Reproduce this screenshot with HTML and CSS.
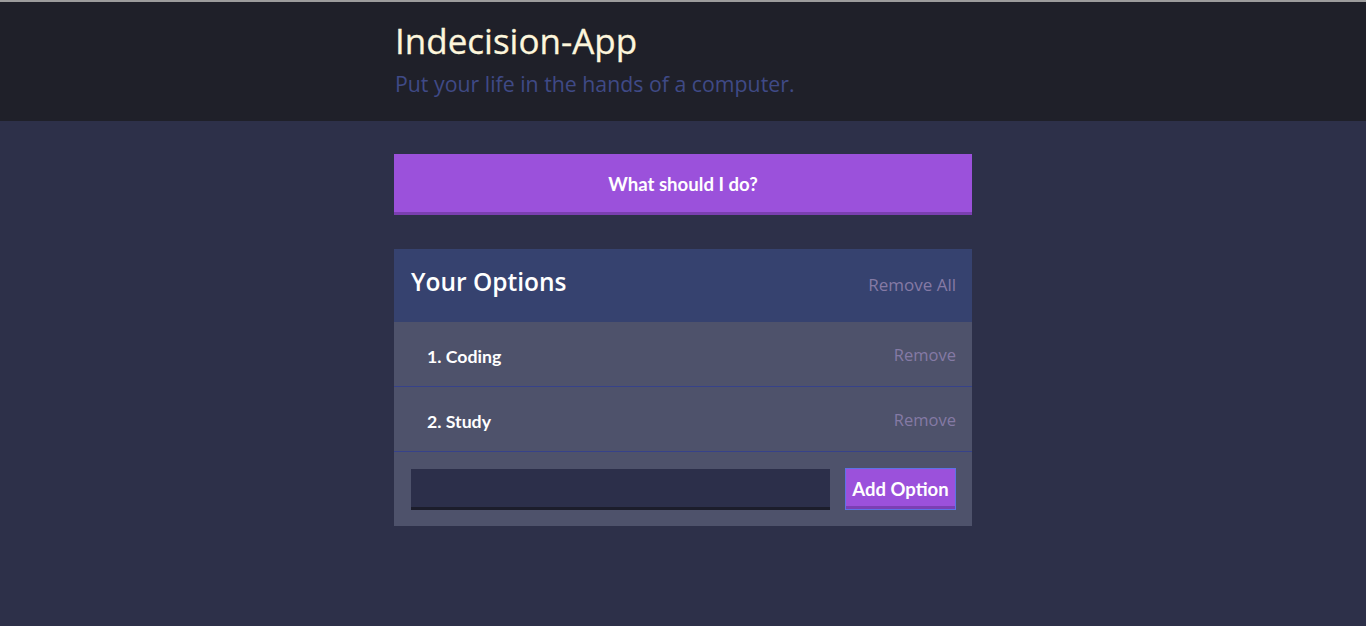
FILE: index.html
```html
<!DOCTYPE html>
<html>
<head>
<meta charset="utf-8">
<title>Indecision-App</title>
<link rel="stylesheet" href="styles.css">
</head>
<body>
<header class="header">
  <div class="container">
    <h1 class="header__title">Indecision-App</h1>
    <h2 class="header__subtitle">Put your life in the hands of a computer.</h2>
  </div>
</header>
<main class="container">
  <button class="big-button">What should I do?</button>
  <section class="widget">
    <div class="widget-header">
      <h3 class="widget-header__title">Your Options</h3>
      <button class="button--link">Remove All</button>
    </div>
    <div class="option">
      <p class="option__text">1. Coding</p>
      <button class="button--link">Remove</button>
    </div>
    <div class="option">
      <p class="option__text">2. Study</p>
      <button class="button--link">Remove</button>
    </div>
    <form class="add-option">
      <input class="add-option__input" type="text" name="option">
      <button class="button" type="button">Add Option</button>
    </form>
  </section>
</main>
</body>
</html>
```

FILE: styles.css
```css
* { box-sizing: border-box; }
html, body { margin: 0; padding: 0; }
body {
  background: #2d3049;
  font-family: "Lato", "Noto Sans", sans-serif;
  color: #ffffff;
  border-top: 2px solid #9c9c9c;
  min-height: 626px;
}
.container {
  width: 578px;
  margin: 0 auto;
}
.header {
  background: #1f2029;
  height: 119px;
  padding-top: 17px;
}
.header__title {
  margin: 0;
  font-family: "Open Sans", sans-serif;
  font-weight: 500;
  font-size: 35px;
  line-height: 44px;
  color: #fdf6dc;
  padding-left: 1px;
  -webkit-text-stroke: 0.3px #fdf6dc;
}
.header__subtitle {
  margin: 4px 0 0;
  font-family: "Open Sans", sans-serif;
  font-weight: 400;
  font-size: 21.3px;
  line-height: 34px;
  color: #3f4a86;
  padding-left: 1px;
}
.big-button {
  display: block;
  width: 100%;
  margin-top: 33px;
  height: 61px;
  background: #9b51db;
  border: none;
  border-bottom: 3px solid #7a3fb0;
  color: #fff;
  font-family: "Lato", sans-serif;
  font-weight: 700;
  font-size: 18.6px;
  padding-top: 2px;
  cursor: pointer;
}
.widget {
  margin-top: 34px;
  background: #4e526b;
}
.widget-header {
  background: #36426f;
  height: 73px;
  display: flex;
  align-items: center;
  justify-content: space-between;
  padding: 0 16px 0 17px;
}
.widget-header__title {
  margin: 0;
  font-family: "Open Sans", sans-serif;
  font-weight: 600;
  font-size: 24.5px;
  color: #fff;
  position: relative;
  top: -4px;
}
.button--link {
  background: none;
  border: none;
  padding: 0;
  font-family: "Open Sans", sans-serif;
  font-size: 17px;
  color: #857aa5;
  cursor: pointer;
}
.widget-header .button--link { position: relative; top: -1px; }
.option {
  height: 65px;
  display: flex;
  align-items: center;
  justify-content: space-between;
  padding: 0 16px 0 33px;
  border-bottom: 1px solid #36428a;
}
.option .button--link { font-size: 16.5px; }
.option__text {
  margin: 0;
  font-family: "Lato", sans-serif;
  font-weight: 700;
  font-size: 17.7px;
  position: relative;
  top: 2px;
}
.add-option {
  display: flex;
  align-items: center;
  gap: 15px;
  padding: 16px 16px 16px 17px;
  height: 74px;
}
.add-option__input {
  flex: 1;
  height: 41px;
  background: #2c2f4a;
  border: none;
  border-bottom: 3px solid #1c1d2b;
  color: #fff;
  font-size: 16px;
  outline: none;
  margin-top: 1px;
}
.button {
  height: 42px;
  width: 111px;
  background: #9b51db;
  border: 1px solid #5d72e6;
  box-shadow: inset 0 -3px 0 #7b3fb3;
  color: #fff;
  font-family: "Lato", sans-serif;
  font-weight: 700;
  font-size: 18.5px;
  padding: 0;
  cursor: pointer;
}
```
